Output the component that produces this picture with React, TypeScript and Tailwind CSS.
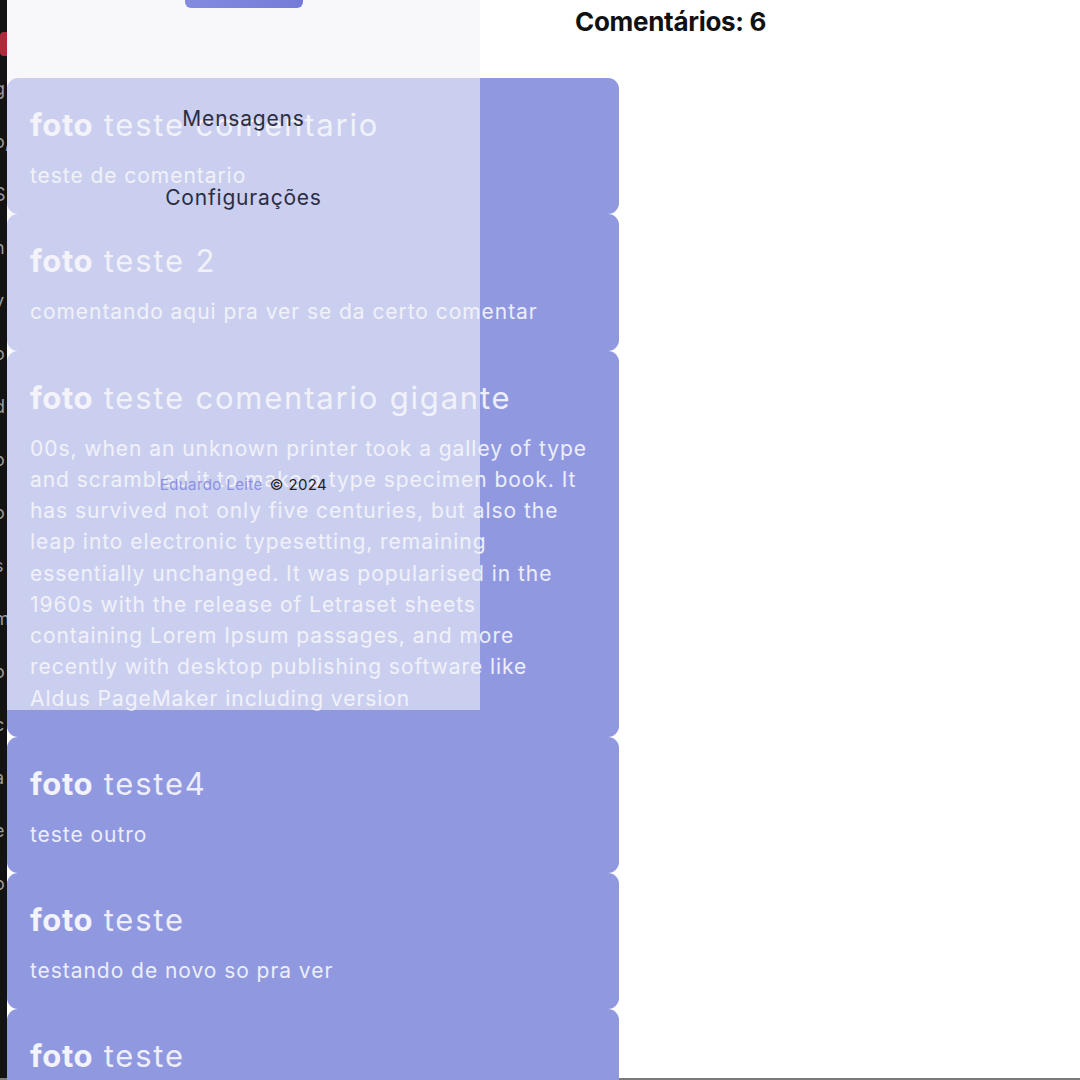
import React from "react";

const font = { fontFamily: "Inter, 'Noto Sans', sans-serif" };

type C = { title: string; lines: string[] };

const comments: C[] = [
  { title: "teste comentario", lines: ["teste de comentario"] },
  { title: "teste 2", lines: ["comentando aqui pra ver se da certo comentar"] },
  {
    title: "teste comentario gigante",
    lines: [
      "00s, when an unknown printer took a galley of type",
      "and scrambled it to make a type specimen book. It",
      "has survived not only five centuries, but also the",
      "leap into electronic typesetting, remaining",
      "essentially unchanged. It was popularised in the",
      "1960s with the release of Letraset sheets",
      "containing Lorem Ipsum passages, and more",
      "recently with desktop publishing software like",
      "Aldus PageMaker including version",
    ],
  },
  { title: "teste4", lines: ["teste outro"] },
  { title: "teste", lines: ["testando de novo so pra ver"] },
  { title: "teste", lines: ["teste"] },
];

const stripChars = ["g", "o,", "S", "n", "v", "o", "d", "o", "o", "s", "m", "o", "c", "a", "e", "o"];

export default function App() {
  return (
    <div className="w-[1080px] h-[1080px] overflow-hidden bg-white flex flex-col" style={font}>
      <div className="flex flex-1 min-h-0 relative">
        {/* dark strip */}
        <div className="w-[7px] shrink-0 bg-[#131313] overflow-hidden flex flex-col items-start pt-[36px] gap-[33px]">
          <div className="w-[7px] h-[24px] bg-[#b0283a] rounded-l-sm -mt-[4px] mb-[-10px]" />
          {stripChars.map((c, i) => (
            <span key={i} className="text-[18px] leading-[20px] text-[#9a9a9a] -ml-[6px]">
              {c}
            </span>
          ))}
        </div>

        {/* main */}
        <div className="flex-1 relative">
          <div className="h-[78px] pl-[568px] pt-[6px]">
            <h1 className="text-[26px] leading-[32px] font-bold text-[#111] tracking-[-0.3px]">Comentários: 6</h1>
          </div>
          <div className="w-[612px] flex flex-col">
            {comments.map((c, i) => (
              <div key={i} className="bg-[#9099e0] rounded-[11px] pl-[23px] pr-[20px] pt-[27px] pb-[23px] text-[#f2f3fb]">
                <div className="text-[31px] leading-[40px] tracking-[1.8px]">
                  <span className="font-bold tracking-[0.6px]">foto</span>{" "}
                  <span className="font-normal opacity-95">{c.title}</span>
                </div>
                <div className="mt-[15px] text-[21px] leading-[31.25px] tracking-[0.95px] text-[#eceefa]">
                  {c.lines.map((l, j) => (
                    <div key={j} className="whitespace-nowrap">{l}</div>
                  ))}
                </div>
              </div>
            ))}
          </div>
        </div>

        {/* sidebar overlay */}
        <div className="absolute left-[7px] top-0 w-[473px] h-[710px] bg-[#f3f4f9]/60 flex flex-col items-center">
          <div className="w-[118px] h-[8px] rounded-b-[6px] bg-gradient-to-r from-[#838be0] to-[#737bd8]" />
          <nav className="flex flex-col items-center mt-[99px] gap-[55px] text-[21px] leading-[24px] tracking-[0.8px] text-[#2b2d42]">
            <span>Mensagens</span>
            <span>Configurações</span>
          </nav>
          <div className="mt-[266px] text-[15px] leading-[18px] tracking-[0.4px] flex items-center gap-[7px]">
            <span className="text-[#8a90e2]">Eduardo Leite</span>
            <span className="text-[#222]">© 2024</span>
          </div>
        </div>
      </div>
      <div className="h-[2px] bg-[#7a7a7a]" />
    </div>
  );
}
